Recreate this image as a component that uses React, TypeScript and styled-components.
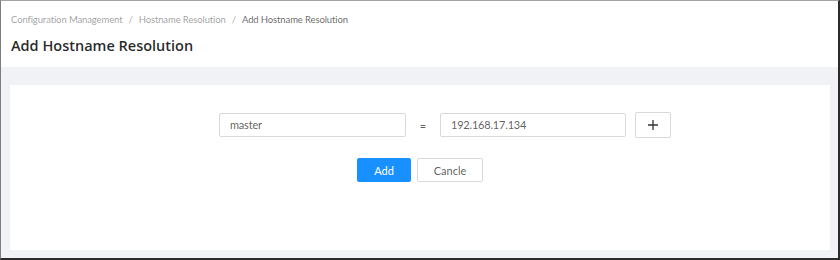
import React from "react";
import styled, { createGlobalStyle } from "styled-components";

const Global = createGlobalStyle`
  html, body { margin: 0; padding: 0; background: #fff; }
  body { font-family: "Lato", "Open Sans", sans-serif; }
  * { box-sizing: border-box; }
`;

const Frame = styled.div`
  width: 840px;
  height: 260px;
  display: flex;
  flex-direction: column;
  border-top: 1px solid #a3a3a3;
  border-left: 1px solid #7d7d7d;
  border-right: 2px solid #2b2b2b;
  border-bottom: 2px solid #2b2b2b;
  background: #f0f2f5;
  overflow: hidden;
`;

const Header = styled.header`
  background: #fff;
  height: 66px;
  padding: 11px 10px 0 10px;
  display: flex;
  flex-direction: column;
  gap: 7px;
`;

const Crumbs = styled.nav`
  display: flex;
  align-items: center;
  font-size: 9.5px;
  letter-spacing: -0.12px;
  line-height: 16px;
  color: rgba(0, 0, 0, 0.4);
`;

const Crumb = styled.span<{ $current?: boolean }>`
  color: ${(p) => (p.$current ? "rgba(0,0,0,0.62)" : "rgba(0,0,0,0.4)")};
`;

const Sep = styled.span`
  margin: 0 6px;
  color: rgba(0, 0, 0, 0.4);
`;

const Title = styled.h1`
  margin: 0;
  font-family: "Open Sans", sans-serif;
  font-size: 14.5px;
  font-weight: 600;
  line-height: 22px;
  color: rgba(0, 0, 0, 0.85);
`;

const Body = styled.main`
  flex: 1;
  padding: 18px 8px 8px 9px;
  display: flex;
`;

const Card = styled.section`
  flex: 1;
  background: #fff;
  padding: 27px 0 0;
  display: flex;
  flex-direction: column;
  align-items: center;
  gap: 20px;
`;

const Row = styled.div`
  display: flex;
  align-items: center;
  padding-left: 50px;
`;

const Input = styled.div<{ $w: number }>`
  width: ${(p) => p.$w}px;
  height: 24px;
  border: 1px solid #d9d9d9;
  border-radius: 2px;
  padding: 0 10px;
  font-size: 11px;
  letter-spacing: -0.2px;
  line-height: 22px;
  color: rgba(0, 0, 0, 0.65);
`;

const Eq = styled.span`
  width: 34px;
  text-align: center;
  font-size: 11px;
  color: rgba(0, 0, 0, 0.65);
`;

const Button = styled.button<{ $primary?: boolean; $w: number; $h?: number }>`
  width: ${(p) => p.$w}px;
  height: ${(p) => p.$h ?? 24}px;
  border-radius: 2px;
  border: 1px solid ${(p) => (p.$primary ? "#1890ff" : "#d9d9d9")};
  background: ${(p) => (p.$primary ? "#1890ff" : "#fff")};
  color: ${(p) => (p.$primary ? "#fff" : "rgba(0,0,0,0.65)")};
  font-family: inherit;
  font-size: 11px;
  padding: 0;
  display: flex;
  align-items: center;
  justify-content: center;
  cursor: pointer;
`;

const PlusButton = styled(Button)`
  margin-left: 9px;
`;

const Actions = styled.div`
  display: flex;
  gap: 6px;
`;

export default function App() {
  return (
    <>
      <Global />
      <Frame>
        <Header>
          <Crumbs>
            <Crumb>Configuration Management</Crumb>
            <Sep>/</Sep>
            <Crumb>Hostname Resolution</Crumb>
            <Sep>/</Sep>
            <Crumb $current>Add Hostname Resolution</Crumb>
          </Crumbs>
          <Title>Add Hostname Resolution</Title>
        </Header>
        <Body>
          <Card>
            <Row>
              <Input $w={187}>master</Input>
              <Eq>=</Eq>
              <Input $w={186}>192.168.17.134</Input>
              <PlusButton $w={36} $h={26}>
                <svg width="12" height="12" viewBox="0 0 12 12">
                  <path d="M6 1v10M1 6h10" stroke="#333" strokeWidth="1.3" />
                </svg>
              </PlusButton>
            </Row>
            <Actions>
              <Button $primary $w={54}>Add</Button>
              <Button $w={66}>Cancle</Button>
            </Actions>
          </Card>
        </Body>
      </Frame>
    </>
  );
}
